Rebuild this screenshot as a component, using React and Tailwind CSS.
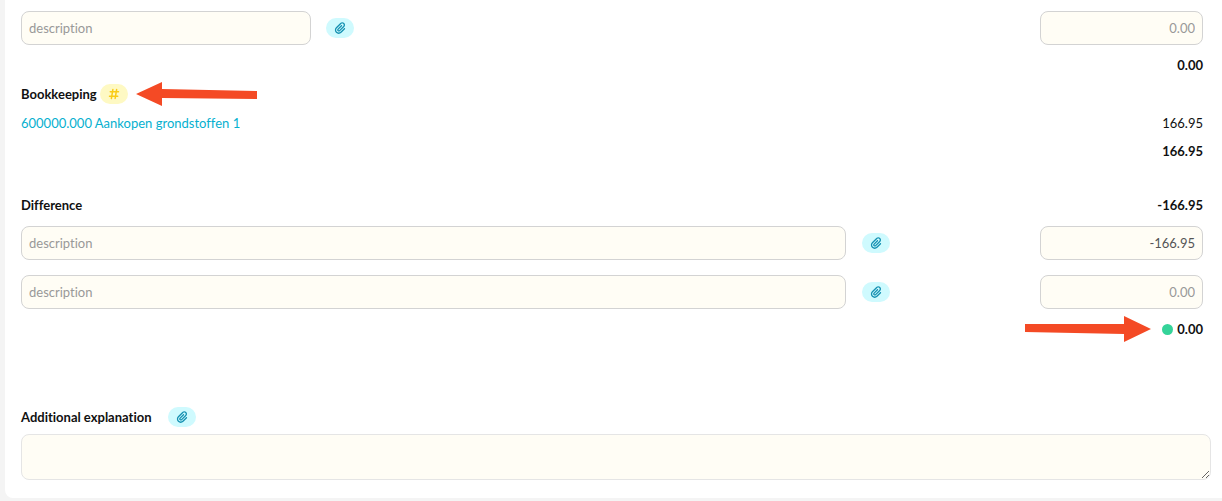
import React, { useState } from 'react';
import { FaHashtag, FaPaperclip } from 'react-icons/fa6';

const inputClass =
  'h-[34px] rounded-lg border border-[#d3d3d3] bg-[#fffdf5] px-[7px] text-[#555555] placeholder:text-[#999999] outline-none focus:border-cyan-500';

const rowClass = 'grid grid-cols-[1fr_194px_163px] items-center';

function AttachButton({ label }) {
  return (
    <button
      type="button"
      aria-label={label}
      className="flex h-5 w-7 shrink-0 items-center justify-center rounded-full bg-[#cffafe] text-[#1591b2]"
    >
      <FaPaperclip size={12} />
    </button>
  );
}

function AmountInput({ label, value, onChange }) {
  return (
    <input
      type="text"
      aria-label={label}
      placeholder="0.00"
      value={value}
      onChange={(e) => onChange(e.target.value)}
      className={`${inputClass} w-full text-right`}
    />
  );
}

function DifferenceRow({ index, initialAmount = '' }) {
  const [amount, setAmount] = useState(initialAmount);

  return (
    <div className={rowClass}>
      <input
        type="text"
        aria-label={`Difference description ${index}`}
        placeholder="description"
        className={`${inputClass} w-full min-w-0`}
      />
      <div className="pl-4">
        <AttachButton label={`Attach file to difference ${index}`} />
      </div>
      <AmountInput label={`Difference amount ${index}`} value={amount} onChange={setAmount} />
    </div>
  );
}

function App() {
  const [amount, setAmount] = useState('');

  return (
    <main className="bg-[#f4f4f4] pb-[3px] pl-[5px] font-['Lato',sans-serif] text-[13px] leading-5 text-[#111111] [font-variant-ligatures:no-common-ligatures]">
      <div className="rounded-bl-lg bg-white pt-[11px] pr-[11px] pb-[18px] pl-4">
        <div className="pr-2">
          <div className={rowClass}>
            <div className="col-span-2 flex items-center gap-[15px]">
              <input
                type="text"
                aria-label="Description"
                placeholder="description"
                className={`${inputClass} w-[290px]`}
              />
              <AttachButton label="Attach file" />
            </div>
            <AmountInput label="Amount" value={amount} onChange={setAmount} />
          </div>
          <p className="mt-[10px] text-right font-bold">0.00</p>

          <section>
            <div className="mt-[7px] flex items-center">
              <h2 className="font-bold">Bookkeeping</h2>
              <button
                type="button"
                aria-label="Account numbers"
                className="ml-[3px] flex h-5 w-7 items-center justify-center rounded-full bg-[#fef9c3] text-[#facc15]"
              >
                <FaHashtag size={12} />
              </button>
              <svg width="121" height="24" viewBox="0 0 121 24" className="ml-2" aria-hidden="true">
                <path d="M0 12 26 0V7L121 9V17L26 16V24Z" fill="#f44a25" />
              </svg>
            </div>
            <div className="mt-[7px] flex items-center justify-between">
              <a href="#account" className="text-[#06b0cf]">
                600000.000 Aankopen grondstoffen 1
              </a>
              <span>166.95</span>
            </div>
            <p className="mt-2 text-right font-bold">166.95</p>
          </section>

          <section className="mt-[34px]">
            <div className="flex items-center justify-between font-bold">
              <h2>Difference</h2>
              <span>-166.95</span>
            </div>
            <div className="mt-[11px] flex flex-col gap-[15px]">
              <DifferenceRow index={1} initialAmount="-166.95" />
              <DifferenceRow index={2} />
            </div>
            <div className="mt-[7px] flex items-center justify-end">
              <svg width="126" height="26" viewBox="0 0 126 26" className="mr-[11px]" aria-hidden="true">
                <path d="M0 8 99 8V0L126 13 99 26V18L0 16Z" fill="#f44a25" />
              </svg>
              <span className="mr-1 size-[11px] rounded-full bg-[#34d399]" />
              <span className="font-bold">0.00</span>
            </div>
          </section>
        </div>

        <div className="mt-[65px] flex items-center gap-4">
          <label htmlFor="explanation" className="font-bold">
            Additional explanation
          </label>
          <AttachButton label="Attach file to explanation" />
        </div>
        <textarea
          id="explanation"
          className="mt-[7px] block h-[46px] w-full resize rounded-lg border border-[#e5e5e5] bg-[#fffdf5] p-2 outline-none"
        />
      </div>
    </main>
  );
}

export default App;
